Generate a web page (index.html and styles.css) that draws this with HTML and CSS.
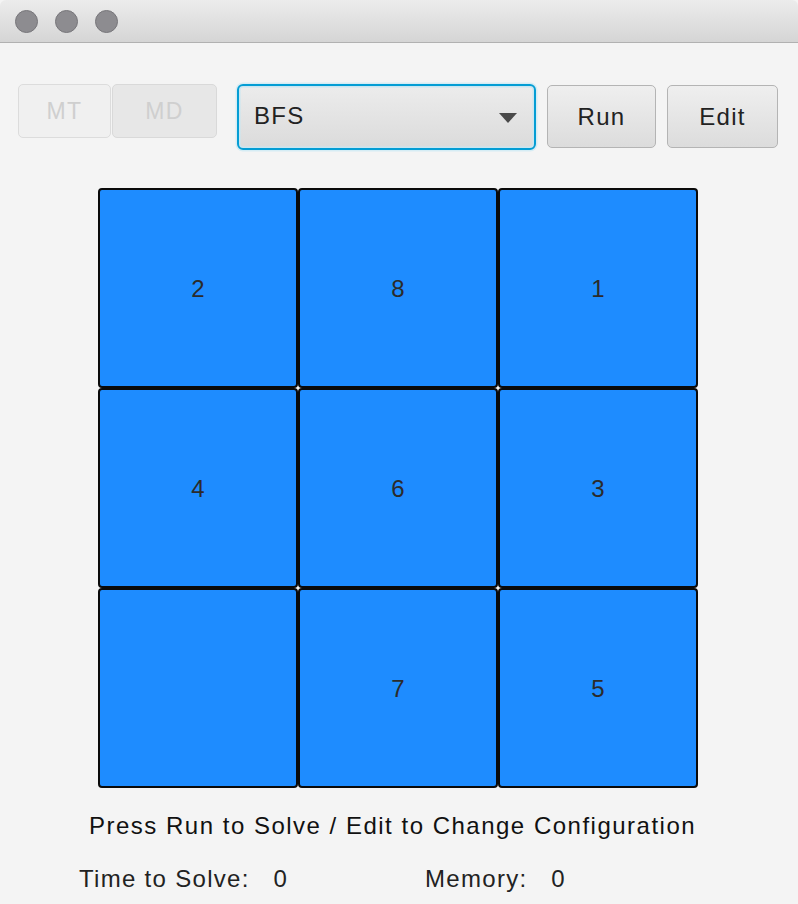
FILE: index.html
```html
<!DOCTYPE html>
<html>
<head>
<meta charset="utf-8">
<link rel="stylesheet" href="styles.css">
</head>
<body>
<div class="window">
  <div class="titlebar">
    <span class="light"></span><span class="light"></span><span class="light"></span>
  </div>
  <div class="content">
    <div class="toolbar">
      <div class="seg">
        <button class="btn disabled mt">MT</button>
        <button class="btn disabled md">MD</button>
      </div>
      <div class="combo">
        <span class="combo-text">BFS</span>
        <span class="arrow"></span>
      </div>
      <button class="btn action run">Run</button>
      <button class="btn action edit">Edit</button>
    </div>
    <div class="board">
      <div class="tile">2</div>
      <div class="tile">8</div>
      <div class="tile">1</div>
      <div class="tile">4</div>
      <div class="tile">6</div>
      <div class="tile">3</div>
      <div class="tile"></div>
      <div class="tile">7</div>
      <div class="tile">5</div>
    </div>
    <div class="message">Press Run to Solve / Edit to Change Configuration</div>
    <div class="stats">
      <div class="stat time">Time to Solve:&nbsp;&nbsp; 0</div>
      <div class="stat mem">Memory:&nbsp;&nbsp; 0</div>
    </div>
  </div>
</div>
</body>
</html>
```
FILE: styles.css
```css
html, body {
  margin: 0;
  padding: 0;
  background: #f4f4f4;
  font-family: "Liberation Sans", Arial, sans-serif;
  letter-spacing: 1.3px;
}
.window {
  width: 798px;
  height: 904px;
  overflow: hidden;
  background: #f4f4f4;
}
.titlebar {
  height: 43px;
  box-sizing: border-box;
  background: linear-gradient(#ececec, #d5d5d5);
  border-bottom: 1px solid #b1b1b1;
  display: flex;
  align-items: center;
  padding-left: 15px;
  gap: 17px;
  border-radius: 6px 6px 0 0;
}
.light {
  width: 23px;
  height: 23px;
  border-radius: 50%;
  background: #8d8c90;
  border: 1px solid #77767a;
  box-sizing: border-box;
}
.content {
  padding-top: 41px;
}
.toolbar {
  display: flex;
  align-items: flex-start;
  padding-left: 18px;
  height: 104px;
}
.seg {
  display: flex;
  gap: 1px;
  margin-right: 20px;
}
.btn {
  font-family: "Liberation Sans", Arial, sans-serif;
  font-size: 22px;
  letter-spacing: 1.3px;
  box-sizing: border-box;
  border-radius: 5px;
  padding: 0;
  margin: 0;
}
.disabled {
  height: 54px;
  color: #cfcfcf;
  border: 1.5px solid #dcdcdc;
  background: #f0f0f0;
  font-size: 23px;
}
.mt { width: 93px; }
.md { width: 105px; background: #e7e7e7; border-color: #d9d9d9; }
.combo {
  width: 299px;
  height: 66px;
  box-sizing: border-box;
  border: 2.5px solid #049dd4;
  border-radius: 6px;
  background: linear-gradient(#ececec, #dbdbdb);
  box-shadow: inset 0 0 0 1.5px #c9e6f1, 0 0 0 1.5px #d5ecf4;
  display: flex;
  align-items: center;
  justify-content: space-between;
  padding: 0 17px 0 15px;
  margin-right: 11px;
}
.combo-text {
  font-size: 24px;
  color: #222;
  margin-top: -2px;
}
.arrow {
  width: 0;
  height: 0;
  border-left: 9px solid transparent;
  border-right: 9px solid transparent;
  border-top: 10px solid #4a4a4a;
  margin-top: 2px;
}
.action {
  height: 63px;
  margin-top: 1px;
  border: 1.5px solid #b4b4b4;
  background: linear-gradient(#efefef, #dcdcdc);
  color: #222;
  font-size: 24px;
}
.run { width: 109px; margin-right: 11px; }
.edit { width: 111px; }
.board {
  display: grid;
  grid-template-columns: repeat(3, 200px);
  grid-template-rows: repeat(3, 200px);
  margin-left: 98px;
  width: 600px;
}
.tile {
  box-sizing: border-box;
  background: #1e8cff;
  border: 2px solid #0a0a0a;
  border-radius: 4px;
  display: flex;
  align-items: center;
  justify-content: center;
  font-size: 24px;
  color: #2b2b2b;
  padding-top: 1px;
  letter-spacing: 0;
}
.message {
  margin-top: 24px;
  padding-left: 89px;
  font-size: 24px;
  letter-spacing: 1.5px;
  color: #111;
  height: 44px;
}
.stats {
  display: flex;
  padding-left: 79px;
  margin-top: 9px;
  font-size: 24px;
  color: #222;
}
.time { width: 346px; }
```
